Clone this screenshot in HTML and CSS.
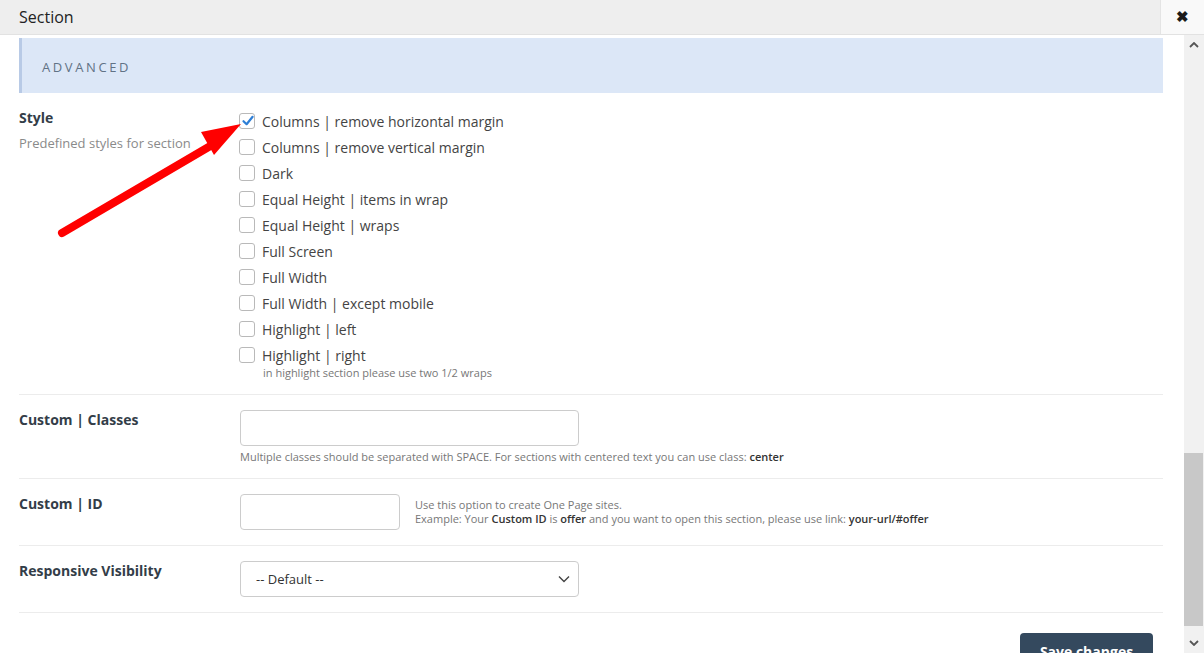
FILE: index.html
```html
<!DOCTYPE html>
<html lang="en">
<head>
    <meta charset="UTF-8">
    <meta name="viewport" content="width=device-width, initial-scale=1.0">
    <title>Section</title>
    <link rel="stylesheet" href="styles.css">
</head>
<body>

    <!-- Header -->
    <header class="modal-header">
        <h1>Section</h1>
        <button class="close-btn">&#10006;</button>
    </header>

    <div class="modal-body">
        <div class="content">

            <div class="panel">ADVANCED</div>

            <!-- Style -->
            <div class="row row-style">
                <div class="label">
                    <h3>Style</h3>
                    <p>Predefined styles for section</p>
                </div>
                <div class="field">
                    <label class="option"><span class="box checked"><svg viewBox="0 0 16 16" width="16" height="16"><path d="M3.5 8.2 L6.6 11.2 L12.6 3.8" fill="none" stroke="#2f7fd6" stroke-width="2.2" stroke-linecap="round" stroke-linejoin="round"/></svg></span>Columns | remove horizontal margin</label>
                    <label class="option"><span class="box"></span>Columns | remove vertical margin</label>
                    <label class="option"><span class="box"></span>Dark</label>
                    <label class="option"><span class="box"></span>Equal Height | items in wrap</label>
                    <label class="option"><span class="box"></span>Equal Height | wraps</label>
                    <label class="option"><span class="box"></span>Full Screen</label>
                    <label class="option"><span class="box"></span>Full Width</label>
                    <label class="option"><span class="box"></span>Full Width | except mobile</label>
                    <label class="option"><span class="box"></span>Highlight | left</label>
                    <label class="option"><span class="box"></span>Highlight | right</label>
                    <p class="hint hint-indent">in highlight section please use two 1/2 wraps</p>
                </div>
            </div>

            <!-- Classes -->
            <div class="row row-classes">
                <div class="label"><h3>Custom | Classes</h3></div>
                <div class="field">
                    <input class="text-input wide" type="text">
                    <p class="hint">Multiple classes should be separated with SPACE. For sections with centered text you can use class: <b>center</b></p>
                </div>
            </div>

            <!-- ID -->
            <div class="row">
                <div class="label"><h3>Custom | ID</h3></div>
                <div class="field field-inline">
                    <input class="text-input narrow" type="text">
                    <p class="hint">Use this option to create One Page sites.<br>Example: Your <b>Custom ID</b> is <b>offer</b> and you want to open this section, please use link: <b>your-url/#offer</b></p>
                </div>
            </div>

            <!-- Visibility -->
            <div class="row">
                <div class="label"><h3>Responsive Visibility</h3></div>
                <div class="field">
                    <div class="select">
                        <span>-- Default --</span>
                        <svg viewBox="0 0 12 8" width="12" height="8"><path d="M1 1.5 L6 6.5 L11 1.5" fill="none" stroke="#444" stroke-width="1.4"/></svg>
                    </div>
                </div>
            </div>

            <div class="actions">
                <button class="save-btn">Save changes</button>
            </div>

            <!-- annotation arrow -->
            <svg class="arrow" width="260" height="240" viewBox="0 0 260 240">
                <line x1="62" y1="198" x2="212" y2="110" stroke="#ff0000" stroke-width="8" stroke-linecap="round"/>
                <polygon points="241,89 201,97 214,120" fill="#ff0000"/>
            </svg>
        </div>

        <div class="scrollbar">
            <span class="sb-arrow">
                <svg viewBox="0 0 10 6" width="10" height="6"><path d="M1 5 L5 1 L9 5" fill="none" stroke="#555" stroke-width="1.8"/></svg>
            </span>
            <div class="sb-track"><div class="sb-thumb"></div></div>
            <span class="sb-arrow">
                <svg viewBox="0 0 10 6" width="10" height="6"><path d="M1 1 L5 5 L9 1" fill="none" stroke="#555" stroke-width="1.8"/></svg>
            </span>
        </div>
    </div>

</body>
</html>
```

FILE: styles.css
```css
body {
    font-family: 'Open Sans', sans-serif;
    background: #fff;
    color: #444;
    margin: 0;
    padding: 0;
    width: 1204px;
    height: 653px;
    overflow: hidden;
}

/* Header */
.modal-header {
    height: 34px;
    background: #eeeeee;
    border-bottom: 1px solid #e2e2e2;
    display: flex;
    align-items: center;
    justify-content: space-between;
}

.modal-header h1 {
    margin: 0 0 0 19px;
    font-size: 16px;
    font-weight: normal;
    color: #222;
}

.close-btn {
    width: 44px;
    height: 34px;
    background: #f9f9f9;
    border: none;
    border-left: 1px solid #e4e4e4;
    color: #1a1a1a;
    font-size: 15px;
    font-weight: bold;
    padding: 0;
    cursor: pointer;
}

/* Body */
.modal-body {
    display: flex;
    height: 618px;
}

.content {
    flex: 1;
    padding: 3px 21px 0 19px;
    position: relative;
    overflow: hidden;
}

.panel {
    height: 55px;
    box-sizing: border-box;
    padding: 3px 0 0 20px;
    background: #dce7f7;
    border-left: 3px solid #b8cae6;
    display: flex;
    align-items: center;
    font-size: 13px;
    letter-spacing: 2.6px;
    color: #617285;
}

/* Rows */
.row {
    display: flex;
    padding: 15px 0 15px;
    border-bottom: 1px solid #ececec;
}

.row-style {
    padding-bottom: 14px;
}

.row-classes {
    padding-bottom: 14px;
}

.label {
    width: 221px;
    flex-shrink: 0;
}

.label h3 {
    margin: 0;
    font-size: 14px;
    font-weight: bold;
    line-height: 20px;
    color: #333d48;
}

.label p {
    margin: 6px 0 0;
    font-size: 13px;
    color: #8a8a8a;
}

.field {
    flex: 1;
}

.field-inline {
    display: flex;
    align-items: flex-start;
}

.option {
    display: flex;
    align-items: center;
    height: 26px;
    font-size: 14px;
    color: #444;
    margin-left: -1px;
}

.box {
    width: 14px;
    height: 14px;
    border: 1px solid #b9b9b9;
    border-radius: 3px;
    margin-right: 7px;
    position: relative;
}

.box svg {
    position: absolute;
    left: 0;
    top: -1px;
}

.hint {
    margin: 4px 0 0;
    font-size: 11px;
    line-height: 14px;
    color: #777;
}

.hint b {
    color: #333;
    font-weight: 600;
}

.hint-indent {
    margin: -2px 0 0 23px;
}

.text-input {
    display: block;
    height: 36px;
    box-sizing: border-box;
    border: 1px solid #cccccc;
    border-radius: 4px;
    margin: 0;
}

.wide {
    width: 339px;
}

.narrow {
    width: 160px;
    margin-right: 15px;
}

.field-inline .hint {
    margin-top: 4px;
}

.select {
    width: 339px;
    height: 36px;
    box-sizing: border-box;
    border: 1px solid #cccccc;
    border-radius: 4px;
    display: flex;
    align-items: center;
    justify-content: space-between;
    padding: 0 8px 0 15px;
    font-size: 13px;
    color: #333;
}

.actions {
    display: flex;
    justify-content: flex-end;
    padding: 20px 10px 0 0;
}

.save-btn {
    background: #34495e;
    color: white;
    border: none;
    border-radius: 4px;
    font-family: 'Open Sans', sans-serif;
    font-size: 14px;
    font-weight: bold;
    white-space: nowrap;
    padding: 0;
    height: 36px;
    width: 133px;
    cursor: pointer;
}

.arrow {
    position: absolute;
    left: 0;
    top: 0;
    pointer-events: none;
}

/* Scrollbar */
.scrollbar {
    width: 20px;
    background: #f1f1f1;
    display: flex;
    flex-direction: column;
}

.sb-arrow {
    height: 20px;
    display: flex;
    align-items: center;
    justify-content: center;
}

.sb-track {
    flex: 1;
    display: flex;
    flex-direction: column;
    justify-content: flex-end;
    padding-bottom: 7px;
}

.sb-thumb {
    height: 173px;
    background: #c8c8c8;
    margin-right: 1px;
}
```
